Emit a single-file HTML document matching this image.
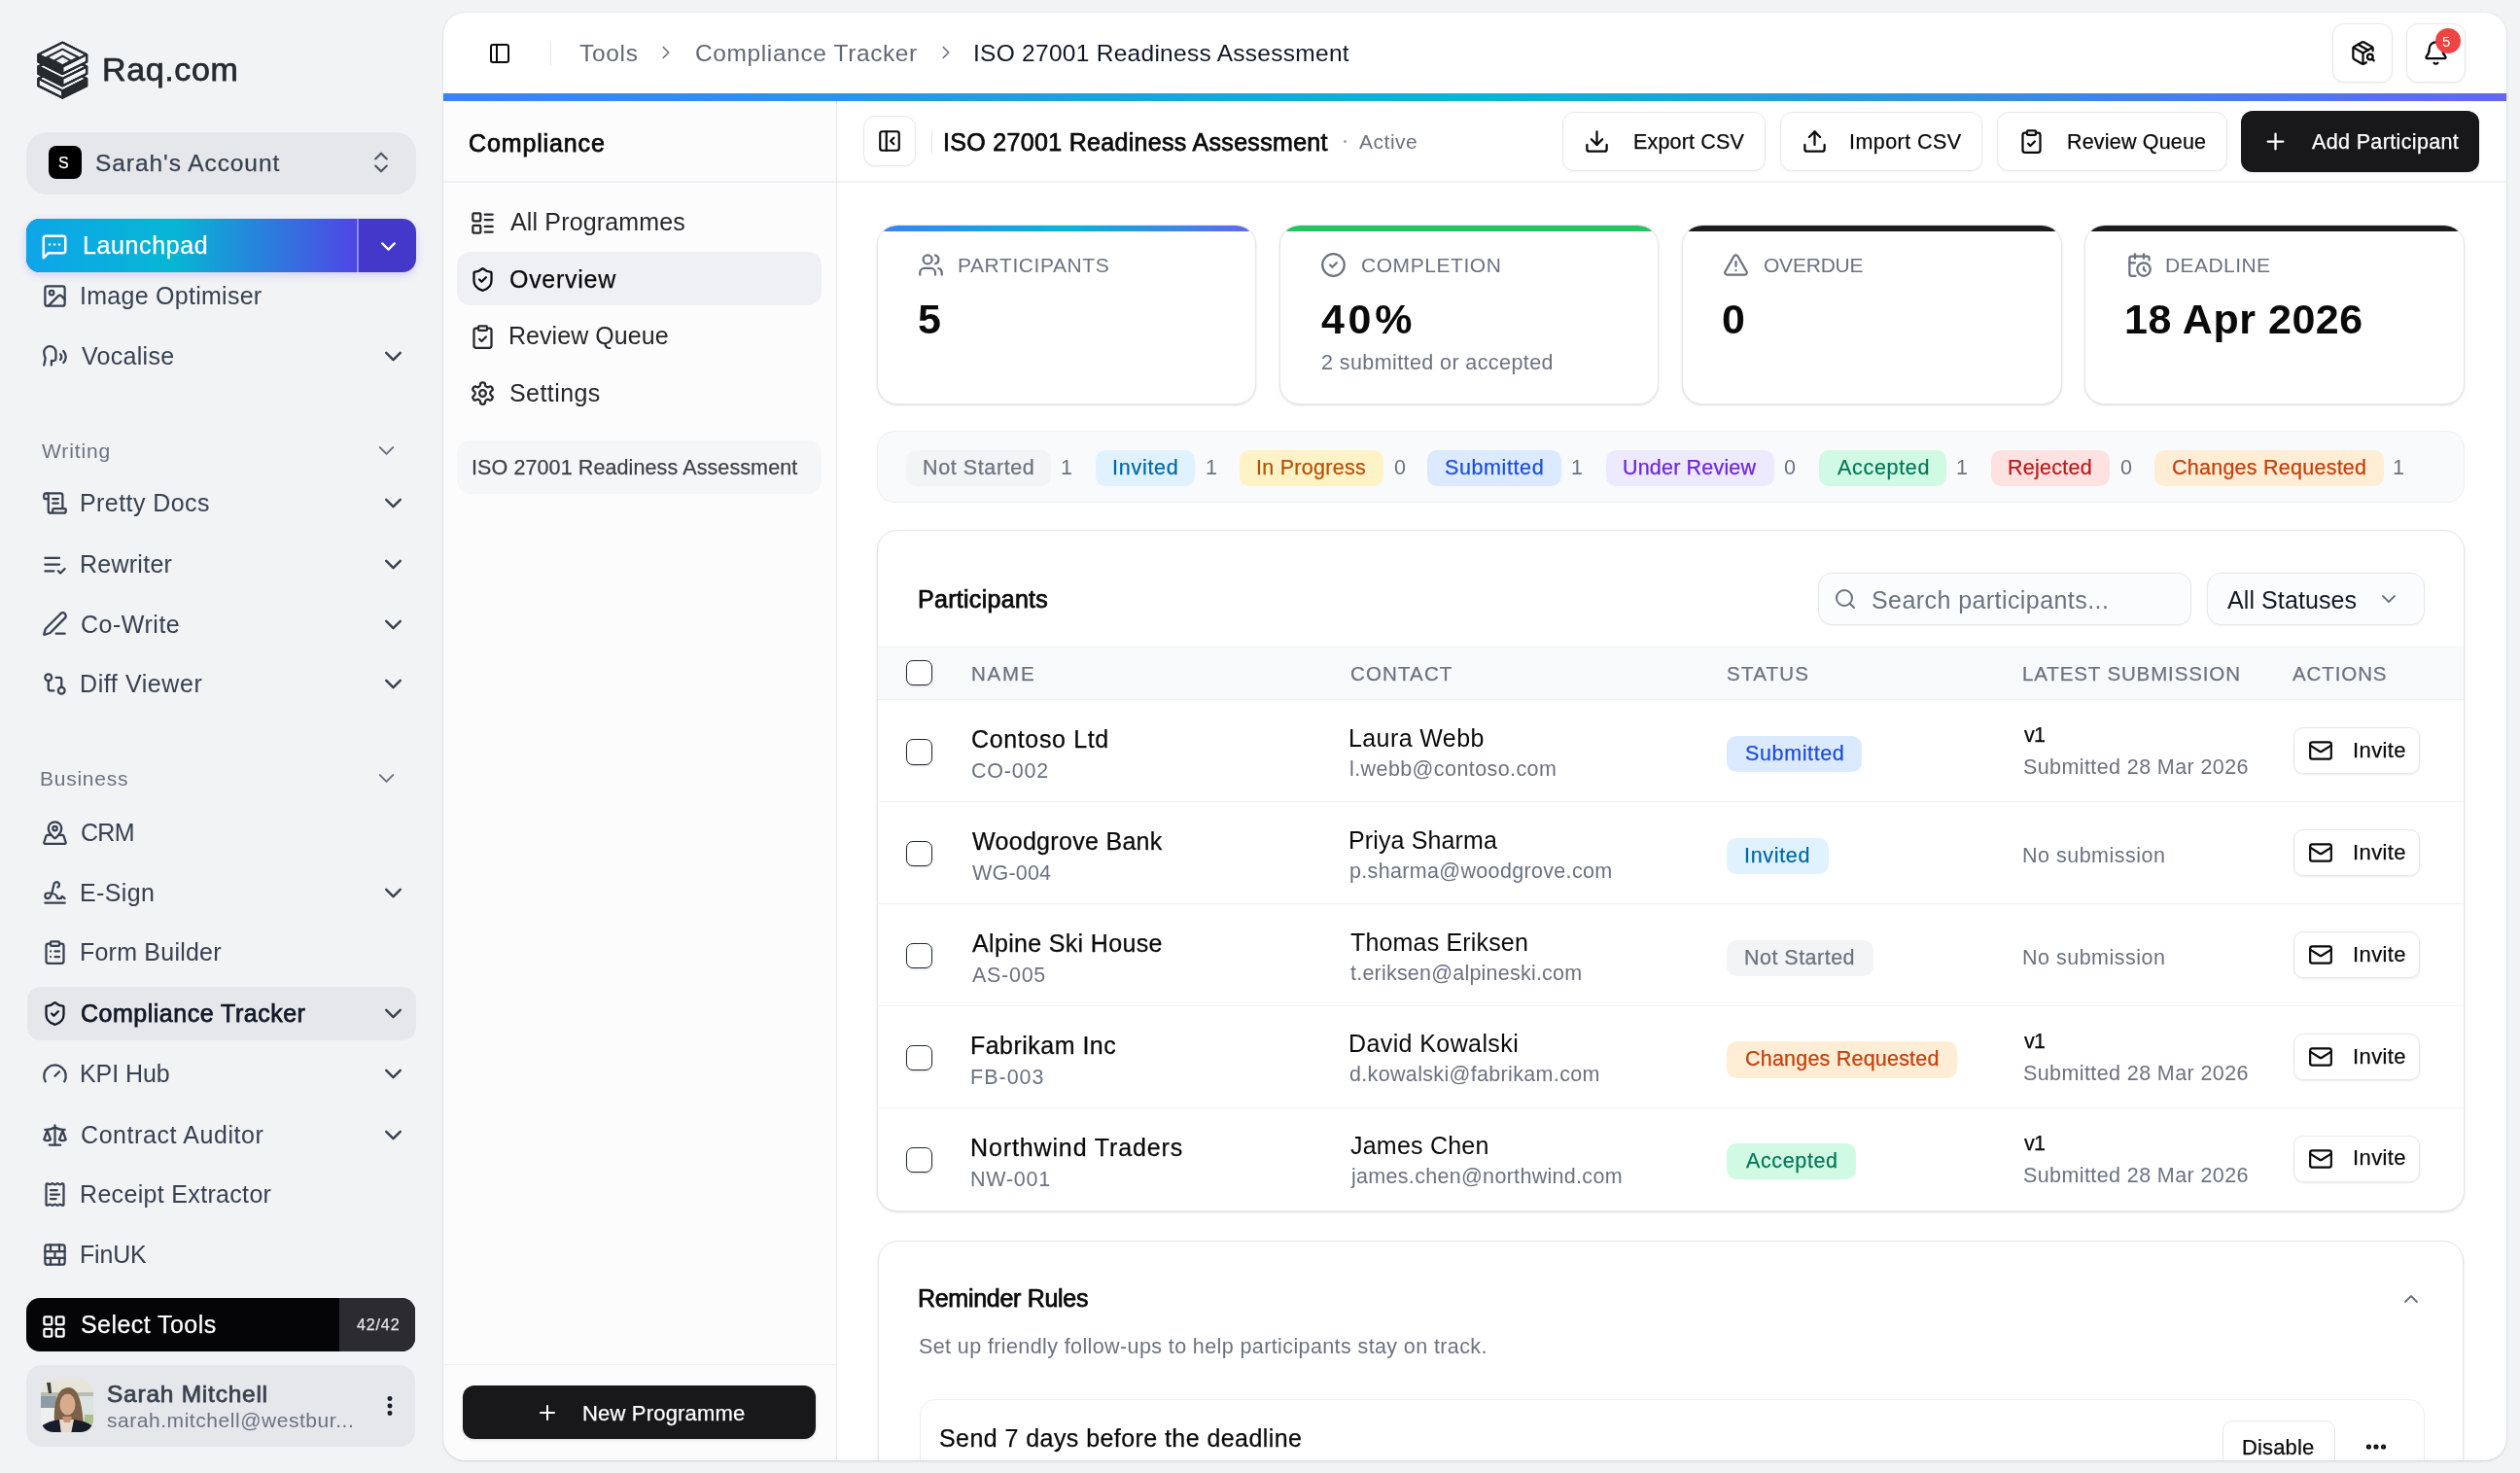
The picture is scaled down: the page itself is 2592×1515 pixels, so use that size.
<!DOCTYPE html><html><head><meta charset="utf-8"><title>Compliance Tracker</title><style>html,body{margin:0;padding:0}
body{width:2592px;height:1515px;overflow:hidden;position:relative;background:#f2f3f5;font-family:"Liberation Sans",sans-serif}
.bx,.ic,.tx{position:absolute}
.tx{white-space:pre;will-change:transform}
.clipmain{position:absolute;left:0;top:0;width:2592px;height:1515px}
body.textonly .bx,body.textonly .ic{visibility:hidden}
body.textonly .tx{color:#000!important;-webkit-text-stroke:0!important}
body.textonly{background:#fff}
@media (max-width:2200px){html{zoom:0.666667}}
</style></head><body><svg class="ic" style="left:32px;top:38px;width:64px;height:68px" viewBox="0 0 64 68"><g stroke="#262b2e" stroke-width="2.1" stroke-linejoin="round" transform="translate(32.3 34.2) scale(0.95) translate(-32.3 -34.2)"><polygon points="32.30,30.20 58.50,43.30 32.30,56.40 6.10,43.30" fill="#f2f3f5"/><polygon points="6.10,43.30 32.30,56.40 32.30,64.20 6.10,51.10" fill="#f2f3f5"/><polygon points="32.30,56.40 58.50,43.30 58.50,51.10 32.30,64.20" fill="#262b2e"/><polygon points="32.30,30.20 58.50,43.30 58.50,51.10 32.30,64.20 6.10,51.10 6.10,43.30" fill="none"/><path d="M6.10,43.30 L32.30,30.20 L58.50,43.30 L58.50,51.10 L32.30,64.20 L6.10,51.10 Z M6.10,43.30 L32.30,56.40 L58.50,43.30 M32.30,56.40 L32.30,64.20" fill="none"/><polygon points="32.30,17.20 58.50,30.30 32.30,43.40 6.10,30.30" fill="#f2f3f5"/><polygon points="6.10,30.30 32.30,43.40 32.30,51.20 6.10,38.10" fill="#262b2e"/><polygon points="32.30,43.40 58.50,30.30 58.50,38.10 32.30,51.20" fill="#f2f3f5"/><polygon points="32.30,17.20 58.50,30.30 58.50,38.10 32.30,51.20 6.10,38.10 6.10,30.30" fill="none"/><path d="M6.10,30.30 L32.30,17.20 L58.50,30.30 L58.50,38.10 L32.30,51.20 L6.10,38.10 Z M6.10,30.30 L32.30,43.40 L58.50,30.30 M32.30,43.40 L32.30,51.20" fill="none"/><polygon points="32.30,4.20 58.50,17.30 32.30,30.40 6.10,17.30" fill="#f2f3f5"/><polygon points="6.10,17.30 32.30,30.40 32.30,38.20 6.10,25.10" fill="#262b2e"/><polygon points="32.30,30.40 58.50,17.30 58.50,25.10 32.30,38.20" fill="#f2f3f5"/><polygon points="32.30,4.20 58.50,17.30 58.50,25.10 32.30,38.20 6.10,25.10 6.10,17.30" fill="none"/><path d="M6.10,17.30 L32.30,4.20 L58.50,17.30 L58.50,25.10 L32.30,38.20 L6.10,25.10 Z M6.10,17.30 L32.30,30.40 L58.50,17.30 M32.30,30.40 L32.30,38.20" fill="none"/><path d="M32.3,11.5 L49.4,20.3 L32.3,29.1 L15.199999999999996,20.3 Z" fill="none"/><path d="M32.3,18.8 L41.5,24 L32.3,29.2 L23.099999999999998,24 Z" fill="none"/></g></svg>
<span id="t0" class="tx" style="left:105.40px;top:54px;font-size:34px;line-height:34px;color:#262b2e;letter-spacing:0.633px;-webkit-text-stroke:0.75px currentColor;">Raq.com</span>
<div class="bx " style="left:27.00px;top:136.00px;width:401.00px;height:64.00px;background:#e5e7eb;border-radius:21px"></div>
<div class="bx " style="left:50.00px;top:150.00px;width:34.00px;height:34.00px;background:#000;border-radius:8px"></div>
<span id="t1" class="tx" style="left:60.20px;top:160px;font-size:16px;line-height:16px;color:#fff;letter-spacing:0.000px;-webkit-text-stroke:0.25px currentColor;">S</span>
<span id="t2" class="tx" style="left:98.00px;top:156px;font-size:24.5px;line-height:24.5px;color:#374151;letter-spacing:0.929px;-webkit-text-stroke:0.25px currentColor;">Sarah&#x27;s Account</span>
<svg class="ic" style="left:377.50px;top:153.00px;width:28px;height:28px;" viewBox="0 0 24 24" fill="none" stroke="#4b5563" stroke-width="1.8" stroke-linecap="round" stroke-linejoin="round"><path d="m7 15 5 5 5-5"/><path d="m7 9 5-5 5 5"/></svg>
<div class="bx " style="left:27.00px;top:225.00px;width:401.00px;height:55.00px;background:#4338ca;border-radius:14px;box-shadow:0 3px 8px rgba(79,70,229,.2);overflow:hidden"><div style="position:absolute;left:0;top:0;width:340px;bottom:0;background:linear-gradient(90deg,#0ea5e9 0%,#06b6d4 45%,#4f46e5 100%)"></div><div style="position:absolute;left:340px;top:0;width:1.5px;bottom:0;background:#8b8cf8"></div></div>
<svg class="ic" style="left:41.00px;top:238.50px;width:30px;height:30px;" viewBox="0 0 24 24" fill="none" stroke="#fff" stroke-width="2" stroke-linecap="round" stroke-linejoin="round"><path d="M21 15a2 2 0 0 1-2 2H7l-4 4V5a2 2 0 0 1 2-2h14a2 2 0 0 1 2 2z"/><path d="M8 10h.01"/><path d="M12 10h.01"/><path d="M16 10h.01"/></svg>
<svg class="ic" style="left:386.50px;top:241.00px;width:25px;height:25px;" viewBox="0 0 24 24" fill="none" stroke="#fff" stroke-width="2.2" stroke-linecap="round" stroke-linejoin="round"><path d="m6 9 6 6 6-6"/></svg>
<span id="t3" class="tx" style="left:85.00px;top:240px;font-size:25px;line-height:25px;color:#fff;letter-spacing:0.625px;-webkit-text-stroke:0.25px currentColor;">Launchpad</span>
<svg class="ic" style="left:42.80px;top:290.80px;width:27px;height:27px;" viewBox="0 0 24 24" fill="none" stroke="#374151" stroke-width="2" stroke-linecap="round" stroke-linejoin="round"><rect width="18" height="18" x="3" y="3" rx="2" ry="2"/><circle cx="9" cy="9" r="2"/><path d="m21 15-3.086-3.086a2 2 0 0 0-2.828 0L6 21"/></svg>
<span id="t4" class="tx" style="left:82.40px;top:292px;font-size:25px;line-height:25px;color:#374151;letter-spacing:0.271px;">Image Optimiser</span>
<svg class="ic" style="left:42.80px;top:352.80px;width:27px;height:27px;" viewBox="0 0 24 24" fill="none" stroke="#374151" stroke-width="2" stroke-linecap="round" stroke-linejoin="round"><path d="M8.8 20v-4.1l1.9.2a2.3 2.3 0 0 0 2.164-2.1V8.3A5.37 5.37 0 0 0 2 8.25c0 2.8.656 3.054 1 4.55a5.77 5.77 0 0 1 .029 2.758L2 20"/><path d="M19.8 17.8a7.5 7.5 0 0 0 .003-10.603"/><path d="M17 15a3.5 3.5 0 0 0-.025-4.975"/></svg>
<span id="t5" class="tx" style="left:84.40px;top:354px;font-size:25px;line-height:25px;color:#374151;letter-spacing:0.286px;">Vocalise</span>
<svg class="ic" style="left:389.50px;top:352.00px;width:29px;height:29px;" viewBox="0 0 24 24" fill="none" stroke="#374151" stroke-width="2" stroke-linecap="round" stroke-linejoin="round"><path d="m6 9 6 6 6-6"/></svg>
<span id="t6" class="tx" style="left:42.60px;top:453px;font-size:21px;line-height:21px;color:#6b7280;letter-spacing:0.867px;">Writing</span>
<svg class="ic" style="left:383.50px;top:450.00px;width:27px;height:27px;" viewBox="0 0 24 24" fill="none" stroke="#6b7280" stroke-width="1.8" stroke-linecap="round" stroke-linejoin="round"><path d="m6 9 6 6 6-6"/></svg>
<svg class="ic" style="left:42.80px;top:503.80px;width:27px;height:27px;" viewBox="0 0 24 24" fill="none" stroke="#374151" stroke-width="2" stroke-linecap="round" stroke-linejoin="round"><path d="M15 12h-5"/><path d="M15 8h-5"/><path d="M19 17V5a2 2 0 0 0-2-2H4"/><path d="M8 21h12a2 2 0 0 0 2-2v-1a1 1 0 0 0-1-1H11a1 1 0 0 0-1 1v1a2 2 0 1 1-4 0V5a2 2 0 1 0-4 0v2a1 1 0 0 0 1 1h3"/></svg>
<span id="t7" class="tx" style="left:82.40px;top:505px;font-size:25px;line-height:25px;color:#374151;letter-spacing:0.420px;">Pretty Docs</span>
<svg class="ic" style="left:389.50px;top:503.00px;width:29px;height:29px;" viewBox="0 0 24 24" fill="none" stroke="#374151" stroke-width="2" stroke-linecap="round" stroke-linejoin="round"><path d="m6 9 6 6 6-6"/></svg>
<svg class="ic" style="left:42.80px;top:567.00px;width:27px;height:27px;" viewBox="0 0 24 24" fill="none" stroke="#374151" stroke-width="2" stroke-linecap="round" stroke-linejoin="round"><path d="M11 18H3"/><path d="m15 18 2 2 4-4"/><path d="M16 12H3"/><path d="M16 6H3"/></svg>
<span id="t8" class="tx" style="left:82.40px;top:568px;font-size:25px;line-height:25px;color:#374151;letter-spacing:0.257px;">Rewriter</span>
<svg class="ic" style="left:389.50px;top:566.20px;width:29px;height:29px;" viewBox="0 0 24 24" fill="none" stroke="#374151" stroke-width="2" stroke-linecap="round" stroke-linejoin="round"><path d="m6 9 6 6 6-6"/></svg>
<svg class="ic" style="left:42.80px;top:628.40px;width:27px;height:27px;" viewBox="0 0 24 24" fill="none" stroke="#374151" stroke-width="2" stroke-linecap="round" stroke-linejoin="round"><path d="M13 21h8"/><path d="M21.174 6.812a1 1 0 0 0-3.986-3.987L3.842 16.174a2 2 0 0 0-.5.83l-1.321 4.352a.5.5 0 0 0 .623.622l4.353-1.32a2 2 0 0 0 .83-.497z"/></svg>
<span id="t9" class="tx" style="left:83.40px;top:630px;font-size:25px;line-height:25px;color:#374151;letter-spacing:0.514px;">Co-Write</span>
<svg class="ic" style="left:389.50px;top:627.60px;width:29px;height:29px;" viewBox="0 0 24 24" fill="none" stroke="#374151" stroke-width="2" stroke-linecap="round" stroke-linejoin="round"><path d="m6 9 6 6 6-6"/></svg>
<svg class="ic" style="left:42.80px;top:690.00px;width:27px;height:27px;" viewBox="0 0 24 24" fill="none" stroke="#374151" stroke-width="2" stroke-linecap="round" stroke-linejoin="round"><circle cx="18" cy="18" r="3"/><circle cx="6" cy="6" r="3"/><path d="M13 6h3a2 2 0 0 1 2 2v7"/><path d="M11 18H8a2 2 0 0 1-2-2V9"/></svg>
<span id="t10" class="tx" style="left:82.40px;top:691px;font-size:25px;line-height:25px;color:#374151;letter-spacing:0.580px;">Diff Viewer</span>
<svg class="ic" style="left:389.50px;top:689.20px;width:29px;height:29px;" viewBox="0 0 24 24" fill="none" stroke="#374151" stroke-width="2" stroke-linecap="round" stroke-linejoin="round"><path d="m6 9 6 6 6-6"/></svg>
<span id="t11" class="tx" style="left:40.60px;top:790px;font-size:21px;line-height:21px;color:#6b7280;letter-spacing:0.743px;">Business</span>
<svg class="ic" style="left:383.50px;top:787.00px;width:27px;height:27px;" viewBox="0 0 24 24" fill="none" stroke="#6b7280" stroke-width="1.8" stroke-linecap="round" stroke-linejoin="round"><path d="m6 9 6 6 6-6"/></svg>
<div class="bx " style="left:28.00px;top:1015.00px;width:399.50px;height:55.00px;background:#e5e7eb;border-radius:14px"></div>
<svg class="ic" style="left:42.80px;top:842.80px;width:27px;height:27px;" viewBox="0 0 24 24" fill="none" stroke="#374151" stroke-width="2" stroke-linecap="round" stroke-linejoin="round"><path d="M18 8c0 3.613-3.869 7.429-5.393 8.795a1 1 0 0 1-1.214 0C9.87 15.429 6 11.613 6 8a6 6 0 0 1 12 0"/><circle cx="12" cy="8" r="2"/><path d="M8.714 14h-3.71a1 1 0 0 0-.948.683l-2.004 6A1 1 0 0 0 3 22h18a1 1 0 0 0 .948-1.316l-2-6a1 1 0 0 0-.949-.684h-3.712"/></svg>
<span id="t12" class="tx" style="left:83.40px;top:844px;font-size:25px;line-height:25px;color:#374151;letter-spacing:-0.700px;">CRM</span>
<svg class="ic" style="left:42.80px;top:904.80px;width:27px;height:27px;" viewBox="0 0 24 24" fill="none" stroke="#374151" stroke-width="2" stroke-linecap="round" stroke-linejoin="round"><path d="m21 17-2.156-1.868A.5.5 0 0 0 18 15.5v.5a1 1 0 0 1-1 1h-2a1 1 0 0 1-1-1c0-2.545-3.991-3.97-8.5-4a1 1 0 0 0 0 5c4.153 0 4.745-11.295 5.708-13.5a2.5 2.5 0 1 1 3.31 3.284"/><path d="M3 21h18"/></svg>
<span id="t13" class="tx" style="left:82.40px;top:906px;font-size:25px;line-height:25px;color:#374151;letter-spacing:0.360px;">E-Sign</span>
<svg class="ic" style="left:389.50px;top:904.00px;width:29px;height:29px;" viewBox="0 0 24 24" fill="none" stroke="#374151" stroke-width="2" stroke-linecap="round" stroke-linejoin="round"><path d="m6 9 6 6 6-6"/></svg>
<svg class="ic" style="left:42.80px;top:965.80px;width:27px;height:27px;" viewBox="0 0 24 24" fill="none" stroke="#374151" stroke-width="2" stroke-linecap="round" stroke-linejoin="round"><rect width="8" height="4" x="8" y="2" rx="1" ry="1"/><path d="M16 4h2a2 2 0 0 1 2 2v14a2 2 0 0 1-2 2H6a2 2 0 0 1-2-2V6a2 2 0 0 1 2-2h2"/><path d="M12 11h4"/><path d="M12 16h4"/><path d="M8 11h.01"/><path d="M8 16h.01"/></svg>
<span id="t14" class="tx" style="left:82.40px;top:967px;font-size:25px;line-height:25px;color:#374151;letter-spacing:0.218px;">Form Builder</span>
<svg class="ic" style="left:42.80px;top:1029.10px;width:27px;height:27px;" viewBox="0 0 24 24" fill="none" stroke="#111827" stroke-width="2" stroke-linecap="round" stroke-linejoin="round"><path d="M20 13c0 5-3.5 7.5-7.66 8.95a1 1 0 0 1-.67-.01C7.5 20.5 4 18 4 13V6a1 1 0 0 1 1-1c2 0 4.5-1.2 6.24-2.72a1.17 1.17 0 0 1 1.52 0C14.51 3.81 17 5 19 5a1 1 0 0 1 1 1z"/><path d="m9 12 2 2 4-4"/></svg>
<span id="t15" class="tx" style="left:83.40px;top:1030px;font-size:25px;line-height:25px;color:#111827;letter-spacing:0.506px;-webkit-text-stroke:0.75px currentColor;">Compliance Tracker</span>
<svg class="ic" style="left:389.50px;top:1028.30px;width:29px;height:29px;" viewBox="0 0 24 24" fill="none" stroke="#374151" stroke-width="2" stroke-linecap="round" stroke-linejoin="round"><path d="m6 9 6 6 6-6"/></svg>
<svg class="ic" style="left:42.80px;top:1090.60px;width:27px;height:27px;" viewBox="0 0 24 24" fill="none" stroke="#374151" stroke-width="2" stroke-linecap="round" stroke-linejoin="round"><path d="m12 14 4-4"/><path d="M3.34 19a10 10 0 1 1 17.32 0"/></svg>
<span id="t16" class="tx" style="left:82.40px;top:1092px;font-size:25px;line-height:25px;color:#374151;letter-spacing:-0.067px;">KPI Hub</span>
<svg class="ic" style="left:389.50px;top:1089.80px;width:29px;height:29px;" viewBox="0 0 24 24" fill="none" stroke="#374151" stroke-width="2" stroke-linecap="round" stroke-linejoin="round"><path d="m6 9 6 6 6-6"/></svg>
<svg class="ic" style="left:42.80px;top:1154.20px;width:27px;height:27px;" viewBox="0 0 24 24" fill="none" stroke="#374151" stroke-width="2" stroke-linecap="round" stroke-linejoin="round"><path d="m16 16 3-8 3 8c-.87.65-1.92 1-3 1s-2.13-.35-3-1Z"/><path d="m2 16 3-8 3 8c-.87.65-1.92 1-3 1s-2.13-.35-3-1Z"/><path d="M7 21h10"/><path d="M12 3v18"/><path d="M3 7h2c2 0 5-1 7-2 2 1 5 2 7 2h2"/></svg>
<span id="t17" class="tx" style="left:83.40px;top:1155px;font-size:25px;line-height:25px;color:#374151;letter-spacing:0.573px;">Contract Auditor</span>
<svg class="ic" style="left:389.50px;top:1153.40px;width:29px;height:29px;" viewBox="0 0 24 24" fill="none" stroke="#374151" stroke-width="2" stroke-linecap="round" stroke-linejoin="round"><path d="m6 9 6 6 6-6"/></svg>
<svg class="ic" style="left:42.80px;top:1215.20px;width:27px;height:27px;" viewBox="0 0 24 24" fill="none" stroke="#374151" stroke-width="2" stroke-linecap="round" stroke-linejoin="round"><path d="M13 16H8"/><path d="M14 8H8"/><path d="M16 12H8"/><path d="M4 3a1 1 0 0 1 1-1 1.3 1.3 0 0 1 .7.2l.933.6a1.3 1.3 0 0 0 1.4 0l.934-.6a1.3 1.3 0 0 1 1.4 0l.933.6a1.3 1.3 0 0 0 1.4 0l.933-.6a1.3 1.3 0 0 1 1.4 0l.934.6a1.3 1.3 0 0 0 1.4 0l.933-.6A1.3 1.3 0 0 1 19 2a1 1 0 0 1 1 1v18a1 1 0 0 1-1 1 1.3 1.3 0 0 1-.7-.2l-.933-.6a1.3 1.3 0 0 0-1.4 0l-.934.6a1.3 1.3 0 0 1-1.4 0l-.933-.6a1.3 1.3 0 0 0-1.4 0l-.933.6a1.3 1.3 0 0 1-1.4 0l-.934-.6a1.3 1.3 0 0 0-1.4 0l-.933.6a1.3 1.3 0 0 1-.7.2 1 1 0 0 1-1-1z"/></svg>
<span id="t18" class="tx" style="left:82.40px;top:1216px;font-size:25px;line-height:25px;color:#374151;letter-spacing:0.325px;">Receipt Extractor</span>
<svg class="ic" style="left:42.80px;top:1276.80px;width:27px;height:27px;" viewBox="0 0 24 24" fill="none" stroke="#374151" stroke-width="2" stroke-linecap="round" stroke-linejoin="round"><rect width="18" height="18" x="3" y="3" rx="2"/><path d="M12 9v6"/><path d="M16 15v6"/><path d="M16 3v6"/><path d="M3 15h18"/><path d="M3 9h18"/><path d="M8 15v6"/><path d="M8 3v6"/></svg>
<span id="t19" class="tx" style="left:82.40px;top:1278px;font-size:25px;line-height:25px;color:#374151;letter-spacing:-0.200px;">FinUK</span>
<div class="bx " style="left:27.00px;top:1335.00px;width:400.00px;height:55.00px;background:#050507;border-radius:14px;overflow:hidden"><div style="position:absolute;left:322px;top:0;right:0;bottom:0;background:#2b2b30"></div></div>
<svg class="ic" style="left:42.20px;top:1350.50px;width:27px;height:27px;" viewBox="0 0 24 24" fill="none" stroke="#fff" stroke-width="2" stroke-linecap="round" stroke-linejoin="round"><rect width="7" height="7" x="3" y="3" rx="1"/><rect width="7" height="7" x="14" y="3" rx="1"/><rect width="7" height="7" x="14" y="14" rx="1"/><rect width="7" height="7" x="3" y="14" rx="1"/></svg>
<span id="t20" class="tx" style="left:83.20px;top:1350px;font-size:25px;line-height:25px;color:#fff;letter-spacing:0.436px;-webkit-text-stroke:0.25px currentColor;">Select Tools</span>
<span id="t21" class="tx" style="left:367.00px;top:1355px;font-size:16px;line-height:16px;color:#e5e7eb;letter-spacing:0.875px;-webkit-text-stroke:0.25px currentColor;">42/42</span>
<div class="bx " style="left:27.00px;top:1404.00px;width:400.00px;height:84.00px;background:#e5e7eb;border-radius:16px"></div>
<svg class="ic" style="left:42px;top:1419px;width:54px;height:54px" viewBox="0 0 54 54">
<defs><clipPath id="avc"><rect width="54" height="54" rx="13"/></clipPath><filter id="avb" x="-10%" y="-10%" width="120%" height="120%"><feGaussianBlur stdDeviation="0.7"/></filter></defs>
<g clip-path="url(#avc)"><g filter="url(#avb)">
<rect width="54" height="54" fill="#e3e4dc"/>
<rect x="0" y="0" width="54" height="13" fill="#e7e5d9"/>
<rect x="0" y="13" width="54" height="4" fill="#b9bdb6"/>
<rect x="0" y="17" width="16" height="12" fill="#8d9ca6"/>
<rect x="0" y="29" width="16" height="25" fill="#eef0ef"/>
<rect x="40" y="17" width="14" height="37" fill="#dde3de"/>
<rect x="45" y="36" width="9" height="12" fill="#a9c08b"/>
<path d="M6 3 L10 3 L11 14 L8 14Z" fill="#3a3a36"/>
<path d="M14 46 C13 28 15 9 28 8 C40 8 42 26 44 46 Z" fill="#7b6148"/>
<ellipse cx="27.5" cy="25.5" rx="8" ry="11" fill="#d9ab8d"/>
<path d="M-4 58 C-2 46 7 43 20 41 L34 41 C47 43 56 46 58 58 Z" fill="#171c2b"/>
<path d="M19 41 L34 41 L31 56 L21 56 Z" fill="#e6d9c7"/>
<path d="M22 38 L32 38 L30 44 L24 44Z" fill="#c99478"/>
</g></g></svg>
<span id="t22" class="tx" style="left:110.00px;top:1422px;font-size:24.5px;line-height:24.5px;color:#394150;letter-spacing:0.754px;-webkit-text-stroke:0.75px currentColor;">Sarah Mitchell</span>
<span id="t23" class="tx" style="left:110.00px;top:1450px;font-size:21px;line-height:21px;color:#6b7280;letter-spacing:0.542px;">sarah.mitchell@westbur...</span>
<svg class="ic" style="left:388.00px;top:1433.00px;width:26px;height:26px;" viewBox="0 0 24 24" fill="none" stroke="#111827" stroke-width="2.6" stroke-linecap="round" stroke-linejoin="round"><circle cx="12" cy="12" r="1"/><circle cx="12" cy="5" r="1"/><circle cx="12" cy="19" r="1"/></svg>
<div class="bx " style="left:456.00px;top:13.00px;width:2122.00px;height:1489.00px;background:#fff;border-radius:22px;box-shadow:0 0 1.5px rgba(0,0,0,.12),0 1px 3px rgba(0,0,0,.08),0 1px 2px rgba(0,0,0,.05)"></div>
<div class="clipmain" style="clip-path:inset(13px 14px 13px 456px round 22px)">
<svg class="ic" style="left:501.50px;top:43.00px;width:24px;height:24px;" viewBox="0 0 24 24" fill="none" stroke="#0a0a0a" stroke-width="2" stroke-linecap="round" stroke-linejoin="round"><rect width="18" height="18" x="3" y="3" rx="2"/><path d="M9 3v18"/></svg>
<div class="bx " style="left:565.50px;top:42.00px;width:1.50px;height:26.00px;background:#e5e7eb"></div>
<span id="t24" class="tx" style="left:595.80px;top:43px;font-size:24.5px;line-height:24.5px;color:#626875;letter-spacing:0.700px;">Tools</span>
<svg class="ic" style="left:674.40px;top:43.00px;width:22px;height:22px;" viewBox="0 0 24 24" fill="none" stroke="#6b7280" stroke-width="1.8" stroke-linecap="round" stroke-linejoin="round"><path d="m9 18 6-6-6-6"/></svg>
<span id="t25" class="tx" style="left:715.20px;top:43px;font-size:24.5px;line-height:24.5px;color:#626875;letter-spacing:0.612px;">Compliance Tracker</span>
<svg class="ic" style="left:962.40px;top:43.00px;width:22px;height:22px;" viewBox="0 0 24 24" fill="none" stroke="#6b7280" stroke-width="1.8" stroke-linecap="round" stroke-linejoin="round"><path d="m9 18 6-6-6-6"/></svg>
<span id="t26" class="tx" style="left:1000.80px;top:43px;font-size:24.5px;line-height:24.5px;color:#111827;letter-spacing:0.276px;">ISO 27001 Readiness Assessment</span>
<div class="bx " style="left:2399.00px;top:24.00px;width:62.00px;height:60.50px;background:#fff;border:1.5px solid #e5e7eb;border-radius:12px;box-sizing:border-box;box-shadow:0 1px 2px rgba(0,0,0,.05)"></div>
<svg class="ic" style="left:2417.00px;top:41.00px;width:27px;height:27px;" viewBox="0 0 24 24" fill="none" stroke="#0a0a0a" stroke-width="2" stroke-linecap="round" stroke-linejoin="round"><path d="M21 10V8a2 2 0 0 0-1-1.73l-7-4a2 2 0 0 0-2 0l-7 4A2 2 0 0 0 3 8v8a2 2 0 0 0 1 1.73l7 4a2 2 0 0 0 2 0l2-1.14"/><path d="m7.5 4.27 9 5.15"/><path d="M3.29 7 12 12l8.71-5"/><path d="M12 22V12"/><circle cx="18.5" cy="15.5" r="2.5"/><path d="M20.27 17.27 22 19"/></svg>
<div class="bx " style="left:2475.00px;top:24.00px;width:61.00px;height:60.50px;background:#fff;border:1.5px solid #e5e7eb;border-radius:12px;box-sizing:border-box;box-shadow:0 1px 2px rgba(0,0,0,.05)"></div>
<svg class="ic" style="left:2491.50px;top:40.50px;width:27px;height:27px;" viewBox="0 0 24 24" fill="none" stroke="#0a0a0a" stroke-width="2" stroke-linecap="round" stroke-linejoin="round"><path d="M10.268 21a2 2 0 0 0 3.464 0"/><path d="M3.262 15.326A1 1 0 0 0 4 17h16a1 1 0 0 0 .74-1.673C19.41 13.956 18 12.499 18 8A6 6 0 0 0 6 8c0 4.499-1.411 5.956-2.738 7.326"/></svg>
<div class="bx " style="left:2504.50px;top:29.00px;width:26.00px;height:26.00px;background:#ef4444;border-radius:50%"></div>
<span id="t27" class="tx" style="left:2512.00px;top:35px;font-size:15px;line-height:15px;color:#fff;letter-spacing:0.000px;">5</span>
<div class="bx " style="left:456.00px;top:96.00px;width:2122.00px;height:7.50px;background:linear-gradient(90deg,#3b82f6 0%,#06b6d4 50%,#6366f1 100%)"></div>
<div class="bx " style="left:456.00px;top:103.50px;width:405.00px;height:1398.50px;background:#fcfcfd;border-right:1.5px solid #e8e9ee;box-sizing:border-box;border-bottom-left-radius:24px"></div>
<div class="bx " style="left:456.00px;top:186.00px;width:403.50px;height:1.50px;background:#f0f1f3"></div>
<span id="t28" class="tx" style="left:482.40px;top:135px;font-size:25px;line-height:25px;color:#0a0a0a;letter-spacing:0.867px;-webkit-text-stroke:0.75px currentColor;">Compliance</span>
<svg class="ic" style="left:483.20px;top:216.10px;width:27px;height:27px;" viewBox="0 0 24 24" fill="none" stroke="#27272a" stroke-width="2" stroke-linecap="round" stroke-linejoin="round"><rect width="7" height="7" x="3" y="3" rx="1"/><rect width="7" height="7" x="3" y="14" rx="1"/><path d="M14 4h7"/><path d="M14 9h7"/><path d="M14 15h7"/><path d="M14 20h7"/></svg>
<span id="t29" class="tx" style="left:525.00px;top:216px;font-size:25px;line-height:25px;color:#27272a;letter-spacing:0.154px;">All Programmes</span>
<div class="bx " style="left:469.80px;top:259.40px;width:374.80px;height:55.00px;background:#eff0f3;border-radius:14px"></div>
<svg class="ic" style="left:483.20px;top:274.00px;width:27px;height:27px;" viewBox="0 0 24 24" fill="none" stroke="#0a0a0a" stroke-width="2" stroke-linecap="round" stroke-linejoin="round"><path d="M20 13c0 5-3.5 7.5-7.66 8.95a1 1 0 0 1-.67-.01C7.5 20.5 4 18 4 13V6a1 1 0 0 1 1-1c2 0 4.5-1.2 6.24-2.72a1.17 1.17 0 0 1 1.52 0C14.51 3.81 17 5 19 5a1 1 0 0 1 1 1z"/><path d="m9 12 2 2 4-4"/></svg>
<span id="t30" class="tx" style="left:524.00px;top:275px;font-size:25px;line-height:25px;color:#0a0a0a;letter-spacing:0.714px;-webkit-text-stroke:0.25px currentColor;">Overview</span>
<svg class="ic" style="left:483.20px;top:332.50px;width:27px;height:27px;" viewBox="0 0 24 24" fill="none" stroke="#27272a" stroke-width="2" stroke-linecap="round" stroke-linejoin="round"><rect width="8" height="4" x="8" y="2" rx="1" ry="1"/><path d="M16 4h2a2 2 0 0 1 2 2v14a2 2 0 0 1-2 2H6a2 2 0 0 1-2-2V6a2 2 0 0 1 2-2h2"/><path d="m9 14 2 2 4-4"/></svg>
<span id="t31" class="tx" style="left:523.00px;top:333px;font-size:25px;line-height:25px;color:#27272a;letter-spacing:0.055px;">Review Queue</span>
<svg class="ic" style="left:483.20px;top:391.10px;width:27px;height:27px;" viewBox="0 0 24 24" fill="none" stroke="#27272a" stroke-width="2" stroke-linecap="round" stroke-linejoin="round"><path d="M12.22 2h-.44a2 2 0 0 0-2 2v.18a2 2 0 0 1-1 1.73l-.43.25a2 2 0 0 1-2 0l-.15-.08a2 2 0 0 0-2.73.73l-.22.38a2 2 0 0 0 .73 2.73l.15.1a2 2 0 0 1 1 1.72v.51a2 2 0 0 1-1 1.74l-.15.09a2 2 0 0 0-.73 2.73l.22.38a2 2 0 0 0 2.73.73l.15-.08a2 2 0 0 1 2 0l.43.25a2 2 0 0 1 1 1.73V20a2 2 0 0 0 2 2h.44a2 2 0 0 0 2-2v-.18a2 2 0 0 1 1-1.73l.43-.25a2 2 0 0 1 2 0l.15.08a2 2 0 0 0 2.73-.73l.22-.39a2 2 0 0 0-.73-2.73l-.15-.08a2 2 0 0 1-1-1.74v-.5a2 2 0 0 1 1-1.74l.15-.09a2 2 0 0 0 .73-2.73l-.22-.38a2 2 0 0 0-2.73-.73l-.15.08a2 2 0 0 1-2 0l-.43-.25a2 2 0 0 1-1-1.73V4a2 2 0 0 0-2-2z"/><circle cx="12" cy="12" r="3"/></svg>
<span id="t32" class="tx" style="left:524.00px;top:392px;font-size:25px;line-height:25px;color:#27272a;letter-spacing:0.429px;">Settings</span>
<div class="bx " style="left:469.80px;top:453.30px;width:374.80px;height:54.70px;background:#f3f4f6;border-radius:14px;opacity:.8"></div>
<span id="t33" class="tx" style="left:485.00px;top:471px;font-size:21.5px;line-height:21.5px;color:#3f3f46;letter-spacing:0.103px;-webkit-text-stroke:0.25px currentColor;">ISO 27001 Readiness Assessment</span>
<div class="bx " style="left:456.00px;top:1402.50px;width:403.50px;height:1.50px;background:#f0f1f3"></div>
<div class="bx " style="left:475.60px;top:1425.00px;width:363.00px;height:55.00px;background:#18181b;border-radius:12px;box-shadow:0 1px 3px rgba(0,0,0,.15)"></div>
<svg class="ic" style="left:550.80px;top:1440.50px;width:24px;height:24px;" viewBox="0 0 24 24" fill="none" stroke="#fff" stroke-width="2" stroke-linecap="round" stroke-linejoin="round"><path d="M5 12h14"/><path d="M12 5v14"/></svg>
<span id="t34" class="tx" style="left:598.80px;top:1443px;font-size:22px;line-height:22px;color:#fff;letter-spacing:0.183px;-webkit-text-stroke:0.25px currentColor;">New Programme</span>
<div class="bx " style="left:861.00px;top:186.00px;width:1717.00px;height:1.50px;background:#f0f1f3"></div>
<div class="bx " style="left:888.40px;top:119.00px;width:53.60px;height:52.40px;background:#fff;border:1.5px solid #e5e7eb;border-radius:12px;box-sizing:border-box;box-shadow:0 1px 2px rgba(0,0,0,.05)"></div>
<svg class="ic" style="left:902.20px;top:132.20px;width:26px;height:26px;" viewBox="0 0 24 24" fill="none" stroke="#0a0a0a" stroke-width="2" stroke-linecap="round" stroke-linejoin="round"><rect width="18" height="18" x="3" y="3" rx="2"/><path d="M9 3v18"/><path d="m16 15-3-3 3-3"/></svg>
<div class="bx " style="left:957.50px;top:133.00px;width:1.50px;height:26.00px;background:#e5e7eb"></div>
<span id="t35" class="tx" style="left:970.00px;top:134px;font-size:25px;line-height:25px;color:#0a0a0a;letter-spacing:0.317px;-webkit-text-stroke:0.75px currentColor;">ISO 27001 Readiness Assessment</span>
<div class="bx " style="left:1382.20px;top:144.40px;width:3.00px;height:3.00px;background:#9ca3af;border-radius:50%"></div>
<span id="t36" class="tx" style="left:1398.20px;top:135px;font-size:21px;line-height:21px;color:#6b7280;letter-spacing:0.520px;">Active</span>
<div class="bx " style="left:1607.00px;top:115.00px;width:209.00px;height:61.00px;background:#fff;border:1.5px solid #e5e7eb;border-radius:12px;box-sizing:border-box;box-shadow:0 1px 2px rgba(0,0,0,.05)"></div>
<svg class="ic" style="left:1629.00px;top:131.50px;width:27px;height:27px;" viewBox="0 0 24 24" fill="none" stroke="#0a0a0a" stroke-width="2" stroke-linecap="round" stroke-linejoin="round"><path d="M21 15v4a2 2 0 0 1-2 2H5a2 2 0 0 1-2-2v-4"/><path d="m7 10 5 5 5-5"/><path d="M12 15V3"/></svg>
<span id="t37" class="tx" style="left:1680.40px;top:136px;font-size:21.5px;line-height:21.5px;color:#0a0a0a;letter-spacing:0.178px;-webkit-text-stroke:0.25px currentColor;">Export CSV</span>
<div class="bx " style="left:1831.00px;top:115.00px;width:208.00px;height:61.00px;background:#fff;border:1.5px solid #e5e7eb;border-radius:12px;box-sizing:border-box;box-shadow:0 1px 2px rgba(0,0,0,.05)"></div>
<svg class="ic" style="left:1853.00px;top:131.50px;width:27px;height:27px;" viewBox="0 0 24 24" fill="none" stroke="#0a0a0a" stroke-width="2" stroke-linecap="round" stroke-linejoin="round"><path d="M21 15v4a2 2 0 0 1-2 2H5a2 2 0 0 1-2-2v-4"/><path d="m17 8-5-5-5 5"/><path d="M12 3v12"/></svg>
<span id="t38" class="tx" style="left:1902.00px;top:136px;font-size:21.5px;line-height:21.5px;color:#0a0a0a;letter-spacing:0.444px;-webkit-text-stroke:0.25px currentColor;">Import CSV</span>
<div class="bx " style="left:2054.00px;top:115.00px;width:237.00px;height:61.00px;background:#fff;border:1.5px solid #e5e7eb;border-radius:12px;box-sizing:border-box;box-shadow:0 1px 2px rgba(0,0,0,.05)"></div>
<svg class="ic" style="left:2076.00px;top:131.50px;width:27px;height:27px;" viewBox="0 0 24 24" fill="none" stroke="#0a0a0a" stroke-width="2" stroke-linecap="round" stroke-linejoin="round"><rect width="8" height="4" x="8" y="2" rx="1" ry="1"/><path d="M16 4h2a2 2 0 0 1 2 2v14a2 2 0 0 1-2 2H6a2 2 0 0 1-2-2V6a2 2 0 0 1 2-2h2"/><path d="m9 14 2 2 4-4"/></svg>
<span id="t39" class="tx" style="left:2126.00px;top:136px;font-size:21.5px;line-height:21.5px;color:#0a0a0a;letter-spacing:0.182px;-webkit-text-stroke:0.25px currentColor;">Review Queue</span>
<div class="bx " style="left:2305.40px;top:114.30px;width:244.60px;height:62.70px;background:#18181b;border-radius:12px;box-shadow:0 1px 2px rgba(0,0,0,.1)"></div>
<svg class="ic" style="left:2326.50px;top:132.00px;width:27px;height:27px;" viewBox="0 0 24 24" fill="none" stroke="#fff" stroke-width="2" stroke-linecap="round" stroke-linejoin="round"><path d="M5 12h14"/><path d="M12 5v14"/></svg>
<span id="t40" class="tx" style="left:2378.00px;top:136px;font-size:21.5px;line-height:21.5px;color:#fff;letter-spacing:0.357px;-webkit-text-stroke:0.25px currentColor;">Add Participant</span>
<div class="bx " style="left:901.70px;top:231.00px;width:390.80px;height:184.50px;background:#fff;border:1.5px solid #e5e7eb;border-radius:21px;box-sizing:border-box;overflow:hidden;box-shadow:0 1px 3px rgba(0,0,0,.09),0 1px 2px rgba(0,0,0,.05)"><div style="position:absolute;left:0;right:0;top:0;height:6px;background:linear-gradient(90deg,#3b82f6,#06b6d4 50%,#6366f1)"></div></div>
<svg class="ic" style="left:944.20px;top:259.00px;width:27px;height:27px;" viewBox="0 0 24 24" fill="none" stroke="#6b7280" stroke-width="2" stroke-linecap="round" stroke-linejoin="round"><path d="M16 21v-2a4 4 0 0 0-4-4H6a4 4 0 0 0-4 4v2"/><circle cx="9" cy="7" r="4"/><path d="M22 21v-2a4 4 0 0 0-3-3.87"/><path d="M16 3.13a4 4 0 0 1 0 7.75"/></svg>
<span id="t41" class="tx" style="left:985.30px;top:262px;font-size:21px;line-height:21px;color:#6b7280;letter-spacing:0.582px;">PARTICIPANTS</span>
<span id="t42" class="tx" style="left:943.80px;top:307px;font-size:43px;line-height:43px;color:#0a0a0a;letter-spacing:0.000px;font-weight:700;">5</span>
<div class="bx " style="left:1315.90px;top:231.00px;width:390.10px;height:184.50px;background:#fff;border:1.5px solid #e5e7eb;border-radius:21px;box-sizing:border-box;overflow:hidden;box-shadow:0 1px 3px rgba(0,0,0,.09),0 1px 2px rgba(0,0,0,.05)"><div style="position:absolute;left:0;right:0;top:0;height:6px;background:#22c55e"></div></div>
<svg class="ic" style="left:1358.40px;top:259.00px;width:27px;height:27px;" viewBox="0 0 24 24" fill="none" stroke="#6b7280" stroke-width="2" stroke-linecap="round" stroke-linejoin="round"><circle cx="12" cy="12" r="10"/><path d="m9 12 2 2 4-4"/></svg>
<span id="t43" class="tx" style="left:1400.10px;top:262px;font-size:21px;line-height:21px;color:#6b7280;letter-spacing:0.556px;">COMPLETION</span>
<span id="t44" class="tx" style="left:1358.60px;top:307px;font-size:43px;line-height:43px;color:#0a0a0a;letter-spacing:3.650px;font-weight:700;">40%</span>
<span id="t45" class="tx" style="left:1358.60px;top:363px;font-size:21.5px;line-height:21.5px;color:#6b7280;letter-spacing:0.409px;">2 submitted or accepted</span>
<div class="bx " style="left:1729.60px;top:231.00px;width:391.00px;height:184.50px;background:#fff;border:1.5px solid #e5e7eb;border-radius:21px;box-sizing:border-box;overflow:hidden;box-shadow:0 1px 3px rgba(0,0,0,.09),0 1px 2px rgba(0,0,0,.05)"><div style="position:absolute;left:0;right:0;top:0;height:6px;background:#1c1c1f"></div></div>
<svg class="ic" style="left:1772.10px;top:259.00px;width:27px;height:27px;" viewBox="0 0 24 24" fill="none" stroke="#6b7280" stroke-width="2" stroke-linecap="round" stroke-linejoin="round"><path d="m21.73 18-8-14a2 2 0 0 0-3.48 0l-8 14A2 2 0 0 0 4 21h16a2 2 0 0 0 1.73-3"/><path d="M12 9v4"/><path d="M12 17h.01"/></svg>
<span id="t46" class="tx" style="left:1813.90px;top:262px;font-size:21px;line-height:21px;color:#6b7280;letter-spacing:-0.217px;">OVERDUE</span>
<span id="t47" class="tx" style="left:1770.90px;top:307px;font-size:43px;line-height:43px;color:#0a0a0a;letter-spacing:0.000px;font-weight:700;">0</span>
<div class="bx " style="left:2144.20px;top:231.00px;width:390.80px;height:184.50px;background:#fff;border:1.5px solid #e5e7eb;border-radius:21px;box-sizing:border-box;overflow:hidden;box-shadow:0 1px 3px rgba(0,0,0,.09),0 1px 2px rgba(0,0,0,.05)"><div style="position:absolute;left:0;right:0;top:0;height:6px;background:#1c1c1f"></div></div>
<svg class="ic" style="left:2186.70px;top:259.00px;width:27px;height:27px;" viewBox="0 0 24 24" fill="none" stroke="#6b7280" stroke-width="2" stroke-linecap="round" stroke-linejoin="round"><path d="M21 7.5V6a2 2 0 0 0-2-2H5a2 2 0 0 0-2 2v14a2 2 0 0 0 2 2h3.5"/><path d="M16 2v4"/><path d="M8 2v4"/><path d="M3 10h5"/><path d="M17.5 17.5 16 16.3V14"/><circle cx="16" cy="16" r="6"/></svg>
<span id="t48" class="tx" style="left:2227.30px;top:262px;font-size:21px;line-height:21px;color:#6b7280;letter-spacing:0.429px;">DEADLINE</span>
<span id="t49" class="tx" style="left:2184.80px;top:307px;font-size:43px;line-height:43px;color:#0a0a0a;letter-spacing:0.540px;font-weight:700;">18 Apr 2026</span>
<div class="bx " style="left:901.70px;top:443.30px;width:1633.70px;height:74.00px;background:#f9fafb;border:1.5px solid #eceef1;border-radius:18px;box-sizing:border-box"></div>
<div class="bx " style="left:931.70px;top:462.50px;width:149.00px;height:37.50px;background:#f3f4f6;border-radius:10px"></div>
<span id="t50" class="tx" style="left:948.80px;top:471px;font-size:21.5px;line-height:21.5px;color:#6b7280;letter-spacing:0.600px;-webkit-text-stroke:0.25px currentColor;">Not Started</span>
<span id="t51" class="tx" style="left:1091.00px;top:471px;font-size:21.5px;line-height:21.5px;color:#6b7280;letter-spacing:0.000px;">1</span>
<div class="bx " style="left:1126.70px;top:462.50px;width:102.60px;height:37.50px;background:#e0f2fe;border-radius:10px"></div>
<span id="t52" class="tx" style="left:1143.80px;top:471px;font-size:21.5px;line-height:21.5px;color:#0369a1;letter-spacing:0.733px;-webkit-text-stroke:0.25px currentColor;">Invited</span>
<span id="t53" class="tx" style="left:1239.80px;top:471px;font-size:21.5px;line-height:21.5px;color:#6b7280;letter-spacing:0.000px;">1</span>
<div class="bx " style="left:1275.00px;top:462.50px;width:147.70px;height:37.50px;background:#fef3c7;border-radius:10px"></div>
<span id="t54" class="tx" style="left:1292.00px;top:471px;font-size:21.5px;line-height:21.5px;color:#b45309;letter-spacing:0.280px;-webkit-text-stroke:0.25px currentColor;">In Progress</span>
<span id="t55" class="tx" style="left:1434.00px;top:471px;font-size:21.5px;line-height:21.5px;color:#6b7280;letter-spacing:0.000px;">0</span>
<div class="bx " style="left:1468.30px;top:462.50px;width:137.70px;height:37.50px;background:#dbeafe;border-radius:10px"></div>
<span id="t56" class="tx" style="left:1486.20px;top:471px;font-size:21.5px;line-height:21.5px;color:#1d4ed8;letter-spacing:0.600px;-webkit-text-stroke:0.25px currentColor;">Submitted</span>
<span id="t57" class="tx" style="left:1616.00px;top:471px;font-size:21.5px;line-height:21.5px;color:#6b7280;letter-spacing:0.000px;">1</span>
<div class="bx " style="left:1652.00px;top:462.50px;width:173.00px;height:37.50px;background:#ede9fe;border-radius:10px"></div>
<span id="t58" class="tx" style="left:1669.00px;top:471px;font-size:21.5px;line-height:21.5px;color:#6d28d9;letter-spacing:0.182px;-webkit-text-stroke:0.25px currentColor;">Under Review</span>
<span id="t59" class="tx" style="left:1835.00px;top:471px;font-size:21.5px;line-height:21.5px;color:#6b7280;letter-spacing:0.000px;">0</span>
<div class="bx " style="left:1871.20px;top:462.50px;width:130.70px;height:37.50px;background:#d1fae5;border-radius:10px"></div>
<span id="t60" class="tx" style="left:1889.80px;top:471px;font-size:21.5px;line-height:21.5px;color:#047857;letter-spacing:0.686px;-webkit-text-stroke:0.25px currentColor;">Accepted</span>
<span id="t61" class="tx" style="left:2012.00px;top:471px;font-size:21.5px;line-height:21.5px;color:#6b7280;letter-spacing:0.000px;">1</span>
<div class="bx " style="left:2048.00px;top:462.50px;width:121.70px;height:37.50px;background:#fee2e2;border-radius:10px"></div>
<span id="t62" class="tx" style="left:2065.00px;top:471px;font-size:21.5px;line-height:21.5px;color:#b91c1c;letter-spacing:0.257px;-webkit-text-stroke:0.25px currentColor;">Rejected</span>
<span id="t63" class="tx" style="left:2181.00px;top:471px;font-size:21.5px;line-height:21.5px;color:#6b7280;letter-spacing:0.000px;">0</span>
<div class="bx " style="left:2216.00px;top:462.50px;width:235.50px;height:37.50px;background:#ffedd5;border-radius:10px"></div>
<span id="t64" class="tx" style="left:2234.00px;top:471px;font-size:21.5px;line-height:21.5px;color:#c2410c;letter-spacing:0.250px;-webkit-text-stroke:0.25px currentColor;">Changes Requested</span>
<span id="t65" class="tx" style="left:2461.40px;top:471px;font-size:21.5px;line-height:21.5px;color:#6b7280;letter-spacing:0.000px;">1</span>
<div class="bx " style="left:901.60px;top:545.00px;width:1633.40px;height:701.00px;background:#fff;border:1.5px solid #e5e7eb;border-radius:21px;box-sizing:border-box;overflow:hidden;box-shadow:0 1px 3px rgba(0,0,0,.09),0 1px 2px rgba(0,0,0,.05)"><div style="position:absolute;left:0;right:0;top:117.5px;height:56px;background:#f8f9fb;border-bottom:1.5px solid #eceef1;box-sizing:border-box"></div></div>
<span id="t66" class="tx" style="left:943.80px;top:604px;font-size:25px;line-height:25px;color:#0a0a0a;letter-spacing:0.291px;-webkit-text-stroke:0.75px currentColor;">Participants</span>
<div class="bx " style="left:1870.00px;top:589.00px;width:383.60px;height:54.20px;background:#fbfcfd;border:1.5px solid #e5e7eb;border-radius:14px;box-sizing:border-box;box-shadow:0 1px 2px rgba(0,0,0,.04)"></div>
<svg class="ic" style="left:1885.50px;top:603.50px;width:24px;height:24px;" viewBox="0 0 24 24" fill="none" stroke="#6b7280" stroke-width="2" stroke-linecap="round" stroke-linejoin="round"><circle cx="11" cy="11" r="8"/><path d="m21 21-4.3-4.3"/></svg>
<span id="t67" class="tx" style="left:1925.00px;top:605px;font-size:25px;line-height:25px;color:#6b7280;letter-spacing:0.429px;">Search participants...</span>
<div class="bx " style="left:2270.00px;top:589.00px;width:223.60px;height:54.20px;background:#fbfcfd;border:1.5px solid #e5e7eb;border-radius:14px;box-sizing:border-box;box-shadow:0 1px 2px rgba(0,0,0,.04)"></div>
<span id="t68" class="tx" style="left:2291.00px;top:605px;font-size:25px;line-height:25px;color:#111827;letter-spacing:0.091px;">All Statuses</span>
<svg class="ic" style="left:2445.00px;top:604.00px;width:24px;height:24px;" viewBox="0 0 24 24" fill="none" stroke="#6b7280" stroke-width="1.8" stroke-linecap="round" stroke-linejoin="round"><path d="m6 9 6 6 6-6"/></svg>
<div class="bx " style="left:931.70px;top:678.60px;width:26.90px;height:26.50px;background:#fff;border:1.8px solid #1f2937;border-radius:7px;box-sizing:border-box;box-shadow:0 1px 2px rgba(0,0,0,.15)"></div>
<span id="t69" class="tx" style="left:998.80px;top:683px;font-size:20.5px;line-height:20.5px;color:#6b7280;letter-spacing:1.800px;-webkit-text-stroke:0.25px currentColor;">NAME</span>
<span id="t70" class="tx" style="left:1388.60px;top:683px;font-size:20.5px;line-height:20.5px;color:#6b7280;letter-spacing:1.133px;-webkit-text-stroke:0.25px currentColor;">CONTACT</span>
<span id="t71" class="tx" style="left:1776.40px;top:683px;font-size:20.5px;line-height:20.5px;color:#6b7280;letter-spacing:1.240px;-webkit-text-stroke:0.25px currentColor;">STATUS</span>
<span id="t72" class="tx" style="left:2080.40px;top:683px;font-size:20.5px;line-height:20.5px;color:#6b7280;letter-spacing:0.875px;-webkit-text-stroke:0.25px currentColor;">LATEST SUBMISSION</span>
<span id="t73" class="tx" style="left:2358.40px;top:683px;font-size:20.5px;line-height:20.5px;color:#6b7280;letter-spacing:0.900px;-webkit-text-stroke:0.25px currentColor;">ACTIONS</span>
<div class="bx " style="left:931.70px;top:760.00px;width:26.90px;height:26.50px;background:#fff;border:1.8px solid #1f2937;border-radius:7px;box-sizing:border-box;box-shadow:0 1px 2px rgba(0,0,0,.15)"></div>
<span id="t74" class="tx" style="left:999.20px;top:748px;font-size:25px;line-height:25px;color:#0a0a0a;letter-spacing:0.640px;-webkit-text-stroke:0.25px currentColor;">Contoso Ltd</span>
<span id="t75" class="tx" style="left:999.20px;top:783px;font-size:21.5px;line-height:21.5px;color:#6b7280;letter-spacing:0.800px;">CO-002</span>
<span id="t76" class="tx" style="left:1386.60px;top:747px;font-size:25px;line-height:25px;color:#0a0a0a;letter-spacing:0.400px;">Laura Webb</span>
<span id="t77" class="tx" style="left:1387.60px;top:781px;font-size:21.5px;line-height:21.5px;color:#6b7280;letter-spacing:0.412px;">l.webb@contoso.com</span>
<div class="bx " style="left:1776.00px;top:756.70px;width:139.00px;height:37.20px;background:#dbeafe;border-radius:10px"></div>
<span id="t78" class="tx" style="left:1795.00px;top:765px;font-size:21.5px;line-height:21.5px;color:#1d4ed8;letter-spacing:0.625px;-webkit-text-stroke:0.25px currentColor;">Submitted</span>
<span id="t79" class="tx" style="left:2082.00px;top:746px;font-size:21.5px;line-height:21.5px;color:#0a0a0a;letter-spacing:-0.800px;-webkit-text-stroke:0.25px currentColor;">v1</span>
<span id="t80" class="tx" style="left:2081.00px;top:779px;font-size:21.5px;line-height:21.5px;color:#6b7280;letter-spacing:0.400px;">Submitted 28 Mar 2026</span>
<div class="bx " style="left:2358.50px;top:748.00px;width:130.50px;height:48.00px;background:#fff;border:1.5px solid #e5e7eb;border-radius:10px;box-sizing:border-box;box-shadow:0 1px 2px rgba(0,0,0,.08)"></div>
<svg class="ic" style="left:2373.70px;top:759.00px;width:26px;height:26px;" viewBox="0 0 24 24" fill="none" stroke="#0a0a0a" stroke-width="2" stroke-linecap="round" stroke-linejoin="round"><rect width="20" height="16" x="2" y="4" rx="2"/><path d="m22 7-8.97 5.7a1.94 1.94 0 0 1-2.06 0L2 7"/></svg>
<span id="t81" class="tx" style="left:2420.00px;top:761px;font-size:22px;line-height:22px;color:#0a0a0a;letter-spacing:0.400px;-webkit-text-stroke:0.25px currentColor;">Invite</span>
<div class="bx " style="left:901.60px;top:823.90px;width:1633.40px;height:1.50px;background:#f0f1f3"></div>
<div class="bx " style="left:931.70px;top:864.90px;width:26.90px;height:26.50px;background:#fff;border:1.8px solid #1f2937;border-radius:7px;box-sizing:border-box;box-shadow:0 1px 2px rgba(0,0,0,.15)"></div>
<span id="t82" class="tx" style="left:1000.20px;top:853px;font-size:25px;line-height:25px;color:#0a0a0a;letter-spacing:0.308px;-webkit-text-stroke:0.25px currentColor;">Woodgrove Bank</span>
<span id="t83" class="tx" style="left:1000.20px;top:888px;font-size:21.5px;line-height:21.5px;color:#6b7280;letter-spacing:0.200px;">WG-004</span>
<span id="t84" class="tx" style="left:1386.60px;top:852px;font-size:25px;line-height:25px;color:#0a0a0a;letter-spacing:0.127px;">Priya Sharma</span>
<span id="t85" class="tx" style="left:1387.60px;top:886px;font-size:21.5px;line-height:21.5px;color:#6b7280;letter-spacing:0.333px;">p.sharma@woodgrove.com</span>
<div class="bx " style="left:1776.00px;top:861.60px;width:104.50px;height:37.20px;background:#e0f2fe;border-radius:10px"></div>
<span id="t86" class="tx" style="left:1794.00px;top:870px;font-size:21.5px;line-height:21.5px;color:#0369a1;letter-spacing:0.667px;-webkit-text-stroke:0.25px currentColor;">Invited</span>
<span id="t87" class="tx" style="left:2080.00px;top:870px;font-size:21.5px;line-height:21.5px;color:#6b7280;letter-spacing:0.500px;">No submission</span>
<div class="bx " style="left:2358.50px;top:852.90px;width:130.50px;height:48.00px;background:#fff;border:1.5px solid #e5e7eb;border-radius:10px;box-sizing:border-box;box-shadow:0 1px 2px rgba(0,0,0,.08)"></div>
<svg class="ic" style="left:2373.70px;top:863.90px;width:26px;height:26px;" viewBox="0 0 24 24" fill="none" stroke="#0a0a0a" stroke-width="2" stroke-linecap="round" stroke-linejoin="round"><rect width="20" height="16" x="2" y="4" rx="2"/><path d="m22 7-8.97 5.7a1.94 1.94 0 0 1-2.06 0L2 7"/></svg>
<span id="t88" class="tx" style="left:2420.00px;top:866px;font-size:22px;line-height:22px;color:#0a0a0a;letter-spacing:0.400px;-webkit-text-stroke:0.25px currentColor;">Invite</span>
<div class="bx " style="left:901.60px;top:928.80px;width:1633.40px;height:1.50px;background:#f0f1f3"></div>
<div class="bx " style="left:931.70px;top:969.80px;width:26.90px;height:26.50px;background:#fff;border:1.8px solid #1f2937;border-radius:7px;box-sizing:border-box;box-shadow:0 1px 2px rgba(0,0,0,.15)"></div>
<span id="t89" class="tx" style="left:1000.20px;top:958px;font-size:25px;line-height:25px;color:#0a0a0a;letter-spacing:0.333px;-webkit-text-stroke:0.25px currentColor;">Alpine Ski House</span>
<span id="t90" class="tx" style="left:1000.20px;top:993px;font-size:21.5px;line-height:21.5px;color:#6b7280;letter-spacing:0.720px;">AS-005</span>
<span id="t91" class="tx" style="left:1388.60px;top:957px;font-size:25px;line-height:25px;color:#0a0a0a;letter-spacing:0.169px;">Thomas Eriksen</span>
<span id="t92" class="tx" style="left:1388.60px;top:991px;font-size:21.5px;line-height:21.5px;color:#6b7280;letter-spacing:0.218px;">t.eriksen@alpineski.com</span>
<div class="bx " style="left:1776.00px;top:966.50px;width:150.70px;height:37.20px;background:#f3f4f6;border-radius:10px"></div>
<span id="t93" class="tx" style="left:1794.00px;top:975px;font-size:21.5px;line-height:21.5px;color:#6b7280;letter-spacing:0.480px;-webkit-text-stroke:0.25px currentColor;">Not Started</span>
<span id="t94" class="tx" style="left:2080.00px;top:975px;font-size:21.5px;line-height:21.5px;color:#6b7280;letter-spacing:0.500px;">No submission</span>
<div class="bx " style="left:2358.50px;top:957.80px;width:130.50px;height:48.00px;background:#fff;border:1.5px solid #e5e7eb;border-radius:10px;box-sizing:border-box;box-shadow:0 1px 2px rgba(0,0,0,.08)"></div>
<svg class="ic" style="left:2373.70px;top:968.80px;width:26px;height:26px;" viewBox="0 0 24 24" fill="none" stroke="#0a0a0a" stroke-width="2" stroke-linecap="round" stroke-linejoin="round"><rect width="20" height="16" x="2" y="4" rx="2"/><path d="m22 7-8.97 5.7a1.94 1.94 0 0 1-2.06 0L2 7"/></svg>
<span id="t95" class="tx" style="left:2420.00px;top:971px;font-size:22px;line-height:22px;color:#0a0a0a;letter-spacing:0.400px;-webkit-text-stroke:0.25px currentColor;">Invite</span>
<div class="bx " style="left:901.60px;top:1033.70px;width:1633.40px;height:1.50px;background:#f0f1f3"></div>
<div class="bx " style="left:931.70px;top:1074.70px;width:26.90px;height:26.50px;background:#fff;border:1.8px solid #1f2937;border-radius:7px;box-sizing:border-box;box-shadow:0 1px 2px rgba(0,0,0,.15)"></div>
<span id="t96" class="tx" style="left:998.20px;top:1063px;font-size:25px;line-height:25px;color:#0a0a0a;letter-spacing:0.473px;-webkit-text-stroke:0.25px currentColor;">Fabrikam Inc</span>
<span id="t97" class="tx" style="left:998.20px;top:1098px;font-size:21.5px;line-height:21.5px;color:#6b7280;letter-spacing:1.000px;">FB-003</span>
<span id="t98" class="tx" style="left:1386.60px;top:1061px;font-size:25px;line-height:25px;color:#0a0a0a;letter-spacing:0.400px;">David Kowalski</span>
<span id="t99" class="tx" style="left:1387.60px;top:1095px;font-size:21.5px;line-height:21.5px;color:#6b7280;letter-spacing:0.336px;">d.kowalski@fabrikam.com</span>
<div class="bx " style="left:1776.00px;top:1071.40px;width:236.60px;height:37.20px;background:#ffedd5;border-radius:10px"></div>
<span id="t100" class="tx" style="left:1795.00px;top:1079px;font-size:21.5px;line-height:21.5px;color:#c2410c;letter-spacing:0.212px;-webkit-text-stroke:0.25px currentColor;">Changes Requested</span>
<span id="t101" class="tx" style="left:2082.00px;top:1061px;font-size:21.5px;line-height:21.5px;color:#0a0a0a;letter-spacing:-0.800px;-webkit-text-stroke:0.25px currentColor;">v1</span>
<span id="t102" class="tx" style="left:2081.00px;top:1094px;font-size:21.5px;line-height:21.5px;color:#6b7280;letter-spacing:0.400px;">Submitted 28 Mar 2026</span>
<div class="bx " style="left:2358.50px;top:1062.70px;width:130.50px;height:48.00px;background:#fff;border:1.5px solid #e5e7eb;border-radius:10px;box-sizing:border-box;box-shadow:0 1px 2px rgba(0,0,0,.08)"></div>
<svg class="ic" style="left:2373.70px;top:1073.70px;width:26px;height:26px;" viewBox="0 0 24 24" fill="none" stroke="#0a0a0a" stroke-width="2" stroke-linecap="round" stroke-linejoin="round"><rect width="20" height="16" x="2" y="4" rx="2"/><path d="m22 7-8.97 5.7a1.94 1.94 0 0 1-2.06 0L2 7"/></svg>
<span id="t103" class="tx" style="left:2420.00px;top:1076px;font-size:22px;line-height:22px;color:#0a0a0a;letter-spacing:0.400px;-webkit-text-stroke:0.25px currentColor;">Invite</span>
<div class="bx " style="left:901.60px;top:1138.60px;width:1633.40px;height:1.50px;background:#f0f1f3"></div>
<div class="bx " style="left:931.70px;top:1179.60px;width:26.90px;height:26.50px;background:#fff;border:1.8px solid #1f2937;border-radius:7px;box-sizing:border-box;box-shadow:0 1px 2px rgba(0,0,0,.15)"></div>
<span id="t104" class="tx" style="left:998.20px;top:1168px;font-size:25px;line-height:25px;color:#0a0a0a;letter-spacing:0.875px;-webkit-text-stroke:0.25px currentColor;">Northwind Traders</span>
<span id="t105" class="tx" style="left:998.20px;top:1203px;font-size:21.5px;line-height:21.5px;color:#6b7280;letter-spacing:0.760px;">NW-001</span>
<span id="t106" class="tx" style="left:1388.60px;top:1166px;font-size:25px;line-height:25px;color:#0a0a0a;letter-spacing:0.222px;">James Chen</span>
<span id="t107" class="tx" style="left:1389.60px;top:1200px;font-size:21.5px;line-height:21.5px;color:#6b7280;letter-spacing:0.304px;">james.chen@northwind.com</span>
<div class="bx " style="left:1776.00px;top:1176.30px;width:132.60px;height:37.20px;background:#d1fae5;border-radius:10px"></div>
<span id="t108" class="tx" style="left:1796.00px;top:1184px;font-size:21.5px;line-height:21.5px;color:#047857;letter-spacing:0.629px;-webkit-text-stroke:0.25px currentColor;">Accepted</span>
<span id="t109" class="tx" style="left:2082.00px;top:1166px;font-size:21.5px;line-height:21.5px;color:#0a0a0a;letter-spacing:-0.800px;-webkit-text-stroke:0.25px currentColor;">v1</span>
<span id="t110" class="tx" style="left:2081.00px;top:1199px;font-size:21.5px;line-height:21.5px;color:#6b7280;letter-spacing:0.400px;">Submitted 28 Mar 2026</span>
<div class="bx " style="left:2358.50px;top:1167.60px;width:130.50px;height:48.00px;background:#fff;border:1.5px solid #e5e7eb;border-radius:10px;box-sizing:border-box;box-shadow:0 1px 2px rgba(0,0,0,.08)"></div>
<svg class="ic" style="left:2373.70px;top:1178.60px;width:26px;height:26px;" viewBox="0 0 24 24" fill="none" stroke="#0a0a0a" stroke-width="2" stroke-linecap="round" stroke-linejoin="round"><rect width="20" height="16" x="2" y="4" rx="2"/><path d="m22 7-8.97 5.7a1.94 1.94 0 0 1-2.06 0L2 7"/></svg>
<span id="t111" class="tx" style="left:2420.00px;top:1180px;font-size:22px;line-height:22px;color:#0a0a0a;letter-spacing:0.400px;-webkit-text-stroke:0.25px currentColor;">Invite</span>
<div class="bx " style="left:902.90px;top:1276.40px;width:1631.60px;height:283.60px;background:#fff;border:1.5px solid #e5e7eb;border-radius:21px;box-sizing:border-box;box-shadow:0 1px 3px rgba(0,0,0,.09),0 1px 2px rgba(0,0,0,.05)"></div>
<span id="t112" class="tx" style="left:943.80px;top:1323px;font-size:25px;line-height:25px;color:#0a0a0a;letter-spacing:-0.292px;-webkit-text-stroke:0.75px currentColor;">Reminder Rules</span>
<svg class="ic" style="left:2468.00px;top:1324.00px;width:24px;height:24px;" viewBox="0 0 24 24" fill="none" stroke="#6b7280" stroke-width="1.8" stroke-linecap="round" stroke-linejoin="round"><path d="m18 15-6-6-6 6"/></svg>
<span id="t113" class="tx" style="left:944.80px;top:1375px;font-size:21.5px;line-height:21.5px;color:#6b7280;letter-spacing:0.393px;">Set up friendly follow-ups to help participants stay on track.</span>
<div class="bx " style="left:945.70px;top:1439.30px;width:1548.30px;height:120.70px;background:#fff;border:1.5px solid #eceef1;border-radius:16px;box-sizing:border-box"></div>
<span id="t114" class="tx" style="left:966.00px;top:1467px;font-size:25px;line-height:25px;color:#0a0a0a;letter-spacing:0.433px;-webkit-text-stroke:0.25px currentColor;">Send 7 days before the deadline</span>
<div class="bx " style="left:2285.60px;top:1461.20px;width:116.20px;height:78.80px;background:#fff;border:1.5px solid #e5e7eb;border-radius:10px;box-sizing:border-box"></div>
<span id="t115" class="tx" style="left:2306.20px;top:1478px;font-size:22px;line-height:22px;color:#0a0a0a;letter-spacing:0.133px;-webkit-text-stroke:0.25px currentColor;">Disable</span>
<svg class="ic" style="left:2430.70px;top:1475.00px;width:26px;height:26px;" viewBox="0 0 24 24" fill="none" stroke="#0a0a0a" stroke-width="2.8" stroke-linecap="round" stroke-linejoin="round"><circle cx="12" cy="12" r="1"/><circle cx="19" cy="12" r="1"/><circle cx="5" cy="12" r="1"/></svg>
</div></body></html>
